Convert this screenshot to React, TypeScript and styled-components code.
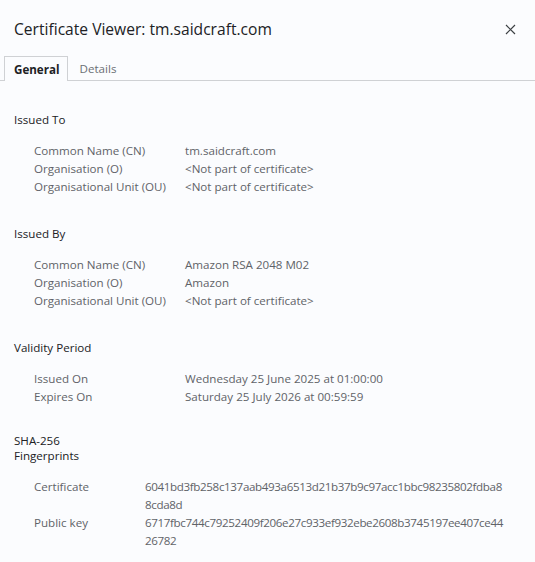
import React from "react";
import styled, { createGlobalStyle } from "styled-components";

const Global = createGlobalStyle`
  html, body { margin: 0; padding: 0; background: #fbfcfe; }
  body { font-family: "Open Sans", "Noto Sans", sans-serif; color: #202124; }
`;

const Dialog = styled.div`
  width: 535px;
  height: 562px;
  background: #fbfcfe;
  display: flex;
  flex-direction: column;
  overflow: hidden;
`;

const TitleBar = styled.div`
  display: flex;
  align-items: center;
  justify-content: space-between;
  padding: 17px 19px 0 14px;
  height: 24px;
`;

const Title = styled.h1`
  margin: 0;
  font-size: 15.6px;
  font-weight: 400;
  color: #202124;
`;

const Close = styled.button`
  border: none;
  background: none;
  padding: 0;
  width: 12px;
  height: 12px;
  display: flex;
  align-items: center;
  justify-content: center;
`;

const TabBar = styled.div`
  display: flex;
  align-items: flex-end;
  margin-top: 15px;
  padding-left: 4px;
  height: 24px;
  border-bottom: 1px solid #cfd1d4;
`;

const Tab = styled.div<{ $active?: boolean }>`
  height: ${(p) => (p.$active ? "25px" : "24px")};
  box-sizing: border-box;
  padding: ${(p) => (p.$active ? "0 7px 0 9px" : "0 7px")};
  display: flex;
  align-items: center;
  font-size: 11.6px;
  font-weight: ${(p) => (p.$active ? 700 : 400)};
  color: ${(p) => (p.$active ? "#202124" : "#6b6f74")};
  border: ${(p) => (p.$active ? "1px solid #cfd1d4" : "1px solid transparent")};
  border-bottom: none;
  background: ${(p) => (p.$active ? "#fbfcfe" : "transparent")};
  margin-bottom: ${(p) => (p.$active ? "-1px" : "0")};
  margin-right: 4px;
`;

const Content = styled.div`
  padding: 31px 14px 0 14px;
  display: flex;
  flex-direction: column;
  gap: 30px;
`;

const Section = styled.section<{ $tight?: boolean }>`
  display: flex;
  flex-direction: column;
  gap: 15px;
  margin-top: ${(p) => (p.$tight ? "-3px" : "0")};
`;

const Heading = styled.h2`
  margin: 0;
  font-size: 11.6px;
  font-weight: 400;
  line-height: 15px;
  color: #202124;
  max-width: 92px;
`;

const Table = styled.div<{ $labelWidth: number }>`
  display: grid;
  grid-template-columns: ${(p) => p.$labelWidth}px 1fr;
  padding-left: 20px;
  font-size: 11.6px;
  line-height: 18px;
  color: #5f6368;
`;

const Label = styled.div``;

const Value = styled.div<{ $hash?: boolean }>`
  word-break: break-all;
  padding-right: 16px;
  letter-spacing: ${(p) => (p.$hash ? "-0.36px" : "0")};
`;

type Row = [string, string];

const sections: { title: string; labelWidth: number; hash?: boolean; rows: Row[] }[] = [
  {
    title: "Issued To",
    labelWidth: 151,
    rows: [
      ["Common Name (CN)", "tm.saidcraft.com"],
      ["Organisation (O)", "<Not part of certificate>"],
      ["Organisational Unit (OU)", "<Not part of certificate>"],
    ],
  },
  {
    title: "Issued By",
    labelWidth: 151,
    rows: [
      ["Common Name (CN)", "Amazon RSA 2048 M02"],
      ["Organisation (O)", "Amazon"],
      ["Organisational Unit (OU)", "<Not part of certificate>"],
    ],
  },
  {
    title: "Validity Period",
    labelWidth: 151,
    rows: [
      ["Issued On", "Wednesday 25 June 2025 at 01:00:00"],
      ["Expires On", "Saturday 25 July 2026 at 00:59:59"],
    ],
  },
  {
    title: "SHA-256 Fingerprints",
    labelWidth: 111,
    hash: true,
    rows: [
      ["Certificate", "6041bd3fb258c137aab493a6513d21b37b9c97acc1bbc98235802fdba88cda8d"],
      ["Public key", "6717fbc744c79252409f206e27c933ef932ebe2608b3745197ee407ce4426782"],
    ],
  },
];

export default function App() {
  return (
    <Dialog>
      <Global />
      <TitleBar>
        <Title>Certificate Viewer: tm.saidcraft.com</Title>
        <Close aria-label="Close">
          <svg width="11" height="11" viewBox="0 0 11 11">
            <path d="M1 1 L10 10 M10 1 L1 10" stroke="#3c4043" strokeWidth="1.2" />
          </svg>
        </Close>
      </TitleBar>
      <TabBar>
        <Tab $active>General</Tab>
        <Tab>Details</Tab>
      </TabBar>
      <Content>
        {sections.map((s) => (
          <Section key={s.title} $tight={s.hash}>
            <Heading>{s.title}</Heading>
            <Table $labelWidth={s.labelWidth}>
              {s.rows.map(([l, v]) => (
                <React.Fragment key={l}>
                  <Label>{l}</Label>
                  <Value $hash={s.hash}>{v}</Value>
                </React.Fragment>
              ))}
            </Table>
          </Section>
        ))}
      </Content>
    </Dialog>
  );
}
